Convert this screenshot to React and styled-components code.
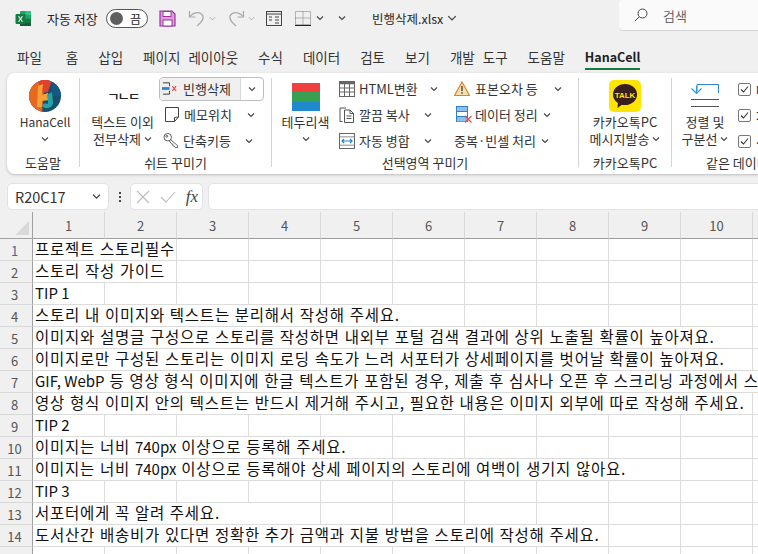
import React from 'react';
import styled, { createGlobalStyle } from 'styled-components';

const GlobalStyle = createGlobalStyle`
  html, body { margin: 0; padding: 0; background: #f0f0f0; overflow: hidden; }
  * { box-sizing: border-box; }
`;

const Page = styled.div`
  width: 758px;
  height: 554px;
  overflow: hidden;
  background: #f0f0f0;
  color: #262626;
  font-family: "Noto Sans CJK KR", sans-serif;
  font-size: 13px;
`;

/* title bar */
const TitleBar = styled.div`
  height: 36px;
  display: flex;
  align-items: center;
  padding-left: 15px;
  white-space: nowrap;
  & > * { flex: none; }
`;
const QuickItem = styled.div`
  display: flex;
  align-items: center;
  margin-left: ${p => p.$ml || 0}px;
`;
const AutoSave = styled.span`
  font-size: 13px;
  margin-left: 15px;
  width: 52px;
`;
const Toggle = styled.div`
  width: 42px;
  height: 19px;
  margin-left: 7px;
  border: 1px solid #555;
  border-radius: 10px;
  display: flex;
  align-items: center;
  padding-left: 3px;
  gap: 7px;
  font-size: 12px;
  background: #fff;
`;
const Knob = styled.span`
  width: 13px;
  height: 13px;
  border-radius: 50%;
  background: #5f5f5f;
`;
const FileName = styled.span`
  font-size: 12.5px;
  margin-left: 26px;
  width: 71px;
`;
const SearchBox = styled.div`
  margin-left: 162px;
  width: 200px;
  height: 31px;
  margin-top: -5px;
  background: #fafafa;
  border-radius: 4px;
  border-bottom: 1px solid #d4d4d4;
  display: flex;
  align-items: center;
  padding-left: 15px;
  gap: 15px;
  color: #666;
  font-size: 13px;
`;

/* tabs */
const TabBar = styled.div`
  height: 34px;
  display: flex;
  padding-left: 17px;
  gap: 20px;
`;
const Tab = styled.div`
  height: 34px;
  line-height: 42px;
  font-size: ${p => (p.$active ? 12.5 : 13.5)}px;
  word-spacing: 5px;
  white-space: nowrap;
  font-weight: ${p => (p.$active ? 700 : 400)};
  color: ${p => (p.$active ? '#1f1f1f' : '#333')};
  border-bottom: 2px solid ${p => (p.$active ? '#107c41' : 'transparent')};
  &:first-child { margin-right: 4px; }
`;

/* ribbon */
const Ribbon = styled.div`
  margin: 3px 0 0 7px;
  width: 800px;
  height: 101px;
  background: #fff;
  border-radius: 8px;
  box-shadow: 0 1px 3px rgba(0, 0, 0, 0.22);
  display: flex;
  overflow: hidden;
`;
const Group = styled.div`
  width: ${p => p.$w}px;
  flex: none;
  display: flex;
  flex-direction: column;
`;
const GroupBody = styled.div`
  height: 81px;
  display: flex;
`;
const GroupLabel = styled.div`
  height: 18px;
  line-height: 18px;
  font-size: 13px;
  color: #333;
  white-space: nowrap;
  text-align: ${p => (p.$left ? 'left' : 'center')};
  padding-left: ${p => p.$pl || 0}px;
`;
const Divider = styled.div`
  width: 1px;
  flex: none;
  margin: 5px 0 7px;
  background: #d4d4d4;
`;
const BigButton = styled.div`
  width: ${p => p.$w}px;
  flex: none;
  padding: 7px 0 0 ${p => p.$pl || 0}px;
  display: flex;
  flex-direction: column;
  align-items: center;
  font-size: 13px;
  white-space: nowrap;
  color: #333;
`;
const BigIcon = styled.div`
  height: 32px;
  margin-bottom: 1px;
  display: flex;
  align-items: center;
  justify-content: center;
`;
const BigLine = styled.div`
  height: 17px;
  line-height: 17px;
  display: flex;
  align-items: center;
  font-size: ${p => p.$size || 13}px;
`;
const Stack = styled.div`
  width: ${p => p.$w}px;
  flex: none;
  padding-top: 3px;
  display: flex;
  flex-direction: column;
`;
const SmallRow = styled.div`
  height: 26px;
  display: flex;
  align-items: center;
  font-size: 13px;
  white-space: nowrap;
  color: #333;
  padding: 0 0 1px ${p => p.$pl || 0}px;
`;
const SmallIcon = styled.span`
  width: 16px;
  height: 16px;
  flex: none;
  margin-right: ${p => p.$mr ?? 4}px;
  display: flex;
  align-items: center;
  justify-content: center;
`;
const SplitButton = styled.div`
  height: 24px;
  margin: 1px 0;
  width: 105px;
  display: flex;
  border: 1px solid #bdbdbd;
  border-radius: 4px;
  overflow: hidden;
  font-size: 13px;
  color: #333;
  white-space: nowrap;
`;
const SplitMain = styled.div`
  width: 80px;
  padding: 0 0 1px 2px;
  background: #f0f0f0;
  display: flex;
  align-items: center;
`;
const SplitSide = styled.div`
  flex: 1;
  display: flex;
  align-items: center;
  justify-content: center;
  border-left: 1px solid #d8d8d8;
`;
const JamoIcon = styled.span`
  font-size: 14px;
  font-weight: 500;
  color: #222;
  letter-spacing: -2.5px;
  line-height: 14px;
  transform: scale(1, 0.8);
`;
const Swatch = styled.div`
  width: 28px;
  height: 28px;
  margin-top: 2px;
  background: linear-gradient(#f04040 33.3%, #38a050 33.3% 66.6%, #2089cd 66.6%);
`;
const ChevronWrap = styled.span`
  display: inline-flex;
  margin-left: ${p => p.$ml || 0}px;
`;
const CheckRow = styled.div`
  height: 26px;
  display: flex;
  align-items: center;
  gap: 5px;
  font-size: 13px;
  white-space: nowrap;
`;
const CheckBox = styled.span`
  width: 13px;
  height: 13px;
  flex: none;
  border: 1px solid #777;
  border-radius: 2px;
  display: flex;
  align-items: center;
  justify-content: center;
`;

/* formula bar */
const FormulaBar = styled.div`
  margin: 9px 0 0 7px;
  height: 27px;
  display: flex;
  align-items: stretch;
`;
const FieldBox = styled.div`
  width: ${p => p.$w}px;
  flex: none;
  background: #fff;
  border: 1px solid #e2e2e2;
  border-radius: 5px;
  display: flex;
  align-items: center;
`;
const NameBox = styled(FieldBox)`
  padding: 0 7px;
  justify-content: space-between;
  font-size: 14.5px;
  color: #333;
`;
const ActionBox = styled(FieldBox)`
  padding: 0 4px 0 5px;
  justify-content: space-between;
`;
const MoreDots = styled.div`
  width: 21px;
  flex: none;
  display: flex;
  flex-direction: column;
  align-items: center;
  justify-content: center;
  gap: 2px;
  span { width: 2px; height: 2px; background: #444; }
`;
const FxLabel = styled.span`
  font-family: "Liberation Serif", serif;
  font-style: italic;
  font-size: 17px;
  color: #444;
`;
const FormulaInput = styled(FieldBox)`
  margin-left: 5px;
`;

/* sheet */
const Sheet = styled.div`
  margin-top: 2px;
  background: #fff;
`;
const Line = styled.div`
  display: grid;
  grid-template-columns: 33px repeat(11, 72px);
  height: ${p => p.$h || 22}px;
`;
const Corner = styled.div`
  background: #f0f0f0;
  border-right: 1px solid #a0a0a0;
  border-bottom: 1px solid #a0a0a0;
  position: relative;
  &::after {
    content: "";
    position: absolute;
    right: 3px;
    bottom: 3px;
    border-left: 14px solid transparent;
    border-bottom: 14px solid #d9d9d9;
  }
`;
const ColHead = styled.div`
  background: #f0f0f0;
  border-right: 1px solid #d8d8d8;
  border-bottom: 1px solid #a0a0a0;
  display: flex;
  align-items: center;
  justify-content: center;
  color: #555;
  font-size: 13px;
`;
const RowHead = styled.div`
  background: #f0f0f0;
  border-right: 1px solid #a0a0a0;
  border-bottom: 1px solid #d8d8d8;
  padding-right: 3px;
  display: flex;
  align-items: center;
  justify-content: center;
  color: ${p => (p.$first ? '#3a6f96' : '#555')};
  font-size: 13px;
  padding-top: 2px;
`;
const Cell = styled.div`
  grid-column: span ${p => p.$span || 1};
  border-right: 1px solid #dcdcdc;
  border-bottom: 1px solid #dcdcdc;
  padding-left: 2px;
  font-size: 15.5px;
  letter-spacing: 0.75px;
  word-spacing: 0.7px;
  line-height: 19px;
  color: #111;
  white-space: nowrap;
  overflow: hidden;
`;
const Latin = styled.span`
  font-size: 15px;
  letter-spacing: 0;
  word-spacing: 0;
`;

const Chevron = ({ ml, size = 8, color = '#444' }) => (
  <ChevronWrap $ml={ml}>
    <svg width={size} height={size} viewBox="0 0 8 8" fill="none" stroke={color} strokeWidth="1.1">
      <path d="M1 2.5 L4 5.5 L7 2.5" />
    </svg>
  </ChevronWrap>
);

const ExcelLogo = () => (
  <svg width="17" height="17" viewBox="0 0 17 17">
    <rect x="5" y="1" width="11" height="15" rx="1" fill="#21a366" />
    <rect x="10.5" y="1" width="5.5" height="4" fill="#33c481" />
    <rect x="5" y="5" width="11" height="3.7" fill="#21a366" />
    <rect x="5" y="8.7" width="11" height="3.7" fill="#107c41" />
    <rect x="5" y="12.4" width="11" height="3.6" fill="#185c37" />
    <rect x="0.5" y="4" width="10" height="10" rx="1" fill="#107c41" />
    <path d="M3 6.2 L4.3 6.2 L5.5 8.2 L6.7 6.2 L8 6.2 L6.2 9 L8 11.8 L6.7 11.8 L5.5 9.8 L4.3 11.8 L3 11.8 L4.8 9 Z" fill="#fff" />
  </svg>
);

const SaveIcon = () => (
  <svg width="17" height="17" viewBox="0 0 17 17">
    <path d="M1 1 H13 L16 4 V16 H1 Z" fill="#d9a0d9" stroke="#a030a0" strokeWidth="1.2" />
    <rect x="4" y="1.5" width="8" height="5" fill="#fff" stroke="#a030a0" />
    <rect x="4" y="10" width="9" height="6" fill="#fff" stroke="#a030a0" />
  </svg>
);

const UndoIcon = ({ flip }) => (
  <svg width="18" height="18" viewBox="0 0 18 18" fill="none" stroke="#a8a8a8" strokeWidth="1.2"
    style={flip ? { transform: 'scaleX(-1)' } : undefined}>
    <path d="M1.5 2 V8 H7.5" />
    <path d="M2 7.5 C5 3.5 10 2.5 13.5 5 C16.5 7.5 15.5 12 9 17" />
  </svg>
);

const FormIcon = () => (
  <svg width="16" height="15" viewBox="0 0 16 15" fill="none" stroke="#444">
    <rect x="0.5" y="0.5" width="15" height="14" />
    <path d="M0.5 3 H15.5" />
    <path d="M3 6 H6 M9 6 H13 M3 9 H6 M9 9 H13 M9 12 H13" />
  </svg>
);

const BorderIcon = () => (
  <svg width="16" height="15" viewBox="0 0 16 15" fill="none" stroke="#777" strokeDasharray="1 1">
    <rect x="0.5" y="0.5" width="15" height="13" />
    <path d="M8 0.5 V14 M0.5 7 H15.5" />
    <path d="M0 14.5 H16" stroke="#222" strokeDasharray="none" />
  </svg>
);

const SearchIcon = () => (
  <svg width="14" height="14" viewBox="0 0 14 14" fill="none" stroke="#444" strokeWidth="1">
    <circle cx="8.5" cy="5.5" r="4.5" />
    <path d="M5.2 8.8 L0.8 13.2" />
  </svg>
);

const HanaLogo = () => (
  <svg width="32" height="32" viewBox="0 0 32 32">
    <defs>
      <clipPath id="hanaClip"><circle cx="16" cy="16" r="16" /></clipPath>
    </defs>
    <g clipPath="url(#hanaClip)">
      <rect width="32" height="32" fill="#17506e" />
      <path d="M0 0 H16 L13 32 H0 Z" fill="#e8681f" />
      <path d="M9 0 H23 L19 12 L12 13 Z" fill="#e0402c" />
      <path d="M9 6 L14 4 L13 15 L19 13 L20 20 L13 21 L13 27 L8 27 Z" fill="#f4a235" />
      <path d="M22 2 H32 V16 L24 16 Z" fill="#155a80" />
      <path d="M18 15 L23 12 L24 23 C23 29 15 30 13 25 L16 23 C18 25 19 24 19 22 Z" fill="#25a3ad" />
    </g>
  </svg>
);

const KakaoLogo = () => (
  <svg width="32" height="32" viewBox="0 0 32 32">
    <rect width="32" height="32" rx="5" fill="#fee500" />
    <ellipse cx="16" cy="14.5" rx="12" ry="10.5" fill="#3a1d1d" />
    <path d="M9 21 L8.5 28 L15 23 Z" fill="#3a1d1d" />
    <text x="16" y="17.5" textAnchor="middle" fontSize="8" fontWeight="700" fill="#fee500"
      fontFamily="Liberation Sans, sans-serif">TALK</text>
  </svg>
);

const RowDeleteIcon = () => (
  <svg width="17" height="13" viewBox="0 0 17 13" fill="none">
    <path d="M1 0.5 H8 V4 M1 12.5 H8 V9" stroke="#333" />
    <rect x="0" y="5" width="8" height="3" fill="#2f86d0" />
    <path d="M11 4 L15 9 M15 4 L11 9" stroke="#e34a4a" strokeWidth="1.2" />
  </svg>
);

const NoteIcon = () => (
  <svg width="14" height="15" viewBox="0 0 14 15" fill="none" stroke="#444">
    <path d="M0.5 0.5 H13.5 V10 L9.5 14.5 H0.5 Z" />
    <path d="M13.5 10 L9.5 10.5 V14.5" />
  </svg>
);

const KeyIcon = () => (
  <svg width="17" height="17" viewBox="0 0 17 17" fill="none" stroke="#555">
    <circle cx="5" cy="5" r="4" />
    <circle cx="4" cy="4" r="1" />
    <path d="M8 7.5 L15.5 14 V16 H13 L12 14.5 L10.5 14 V12.5 L9 12 L6.5 8.5" />
  </svg>
);

const TableIcon = () => (
  <svg width="16" height="16" viewBox="0 0 16 16" fill="none" stroke="#666">
    <rect x="0.5" y="0.5" width="15" height="15" />
    <path d="M0.5 2 H15.5" strokeWidth="2.4" />
    <path d="M0.5 7 H15.5 M0.5 11 H15.5 M5.5 3 V15.5 M10.5 3 V15.5" />
  </svg>
);

const CopyIcon = () => (
  <svg width="16" height="16" viewBox="0 0 16 16" fill="none" stroke="#555">
    <path d="M3.5 14.5 H1 V1 H7" />
    <path d="M5.5 3 H11 L14.5 6.5 V15.5 H5.5 Z" />
    <path d="M11 3 V6.5 H14.5 M7.5 9 H12.5 M7.5 11.5 H12.5" />
  </svg>
);

const MergeIcon = () => (
  <svg width="16" height="16" viewBox="0 0 16 16" fill="none">
    <rect x="0.5" y="0.5" width="15" height="15" stroke="#666" />
    <path d="M0.5 4 H15.5 M0.5 12 H15.5" stroke="#666" />
    <rect x="1" y="4.5" width="14" height="7" fill="#fff" />
    <path d="M3 8 H13 M5 6 L3 8 L5 10 M11 6 L13 8 L11 10" stroke="#2088cc" strokeWidth="1.2" />
  </svg>
);

const WarnIcon = () => (
  <svg width="16" height="15" viewBox="0 0 16 15">
    <path d="M8 1 L15.5 14.5 H0.5 Z" fill="#f7dfae" stroke="#d8802a" strokeWidth="1.2" />
    <path d="M8 5 V10 M8 11.2 V12.8" stroke="#333" strokeWidth="1.3" />
  </svg>
);

const CleanupIcon = () => (
  <svg width="16" height="17" viewBox="0 0 16 17" fill="none">
    <rect x="0.5" y="0.5" width="11" height="15" stroke="#2f80c8" />
    <rect x="1" y="1" width="10" height="4.5" fill="#8cc0ea" />
    <rect x="1" y="11" width="10" height="4.5" fill="#8cc0ea" />
    <path d="M0.5 5.5 H11.5 M0.5 10.5 H11.5" stroke="#2f80c8" />
    <path d="M9 10 L15.5 16.5 M15.5 10 L9 16.5" stroke="#e84a4a" strokeWidth="1.2" />
  </svg>
);

const SortIcon = () => (
  <svg width="28" height="24" viewBox="0 0 28 24" fill="none">
    <path d="M6 7 V0.5 H27.5 V9" stroke="#2f86c8" />
    <path d="M0.5 4.5 L5.5 9.5 L10.5 4.5 M5.5 9 V2" stroke="#2f9bd8" strokeWidth="1.2" />
    <path d="M0 15.5 H28 M0 22.5 H28" stroke="#555" />
  </svg>
);

const CheckMark = () => (
  <svg width="9" height="9" viewBox="0 0 9 9" fill="none" stroke="#333" strokeWidth="1.1">
    <path d="M1 4.5 L3.5 7 L8 1.5" />
  </svg>
);

const TABS = ['파일', '홈', '삽입', '페이지 레이아웃', '수식', '데이터', '검토', '보기', '개발 도구', '도움말'];

const ROWS = [
  { text: '프로젝트 스토리필수', span: 2 },
  { text: '스토리 작성 가이드', span: 2 },
  { text: 'TIP 1', span: 1 },
  { text: '스토리 내 이미지와 텍스트는 분리해서 작성해 주세요.', span: 6 },
  { text: '이미지와 설명글 구성으로 스토리를 작성하면 내외부 포털 검색 결과에 상위 노출될 확률이 높아져요.', span: 10 },
  { text: '이미지로만 구성된 스토리는 이미지 로딩 속도가 느려 서포터가 상세페이지를 벗어날 확률이 높아져요.', span: 10 },
  { text: 'GIF, WebP 등 영상 형식 이미지에 한글 텍스트가 포함된 경우, 제출 후 심사나 오픈 후 스크리닝 과정에서 스토리 수정을 요청할 수 있어요.', span: 11 },
  { text: '영상 형식 이미지 안의 텍스트는 반드시 제거해 주시고, 필요한 내용은 이미지 외부에 따로 작성해 주세요.', span: 10 },
  { text: 'TIP 2', span: 1 },
  { text: '이미지는 너비 740px 이상으로 등록해 주세요.', span: 5 },
  { text: '이미지는 너비 740px 이상으로 등록해야 상세 페이지의 스토리에 여백이 생기지 않아요.', span: 9 },
  { text: 'TIP 3', span: 1 },
  { text: '서포터에게 꼭 알려 주세요.', span: 4 },
  { text: '도서산간 배송비가 있다면 정확한 추가 금액과 지불 방법을 스토리에 작성해 주세요.', span: 8 },
  { text: '', span: 1 },
];

const fillers = (span) => Array.from({ length: 11 - span }, (_, i) => <Cell key={i} />);

// latin runs are set without the hangul tracking
const cellText = (text) =>
  text.split(/(GIF, WebP|TIP \d|740px)/).map((part, i) => (i % 2 ? <Latin key={i}>{part}</Latin> : part));

export default function App() {
  return (
    <Page>
      <GlobalStyle />
      <TitleBar>
        <ExcelLogo />
        <AutoSave>자동 저장</AutoSave>
        <Toggle><Knob />끔</Toggle>
        <QuickItem $ml={11}><SaveIcon /></QuickItem>
        <QuickItem $ml={12}><UndoIcon /><Chevron ml={3} size={7} color="#aaa" /></QuickItem>
        <QuickItem $ml={11}><UndoIcon flip /><Chevron ml={3} size={7} color="#aaa" /></QuickItem>
        <QuickItem $ml={11}><FormIcon /></QuickItem>
        <QuickItem $ml={13}><BorderIcon /><Chevron ml={5} /></QuickItem>
        <QuickItem $ml={14}><Chevron /></QuickItem>
        <FileName>빈행삭제.xlsx</FileName>
        <Chevron ml={4} size={10} />
        <SearchBox><SearchIcon />검색</SearchBox>
      </TitleBar>

      <TabBar>
        {TABS.map((t) => <Tab key={t}>{t}</Tab>)}
        <Tab $active>HanaCell</Tab>
      </TabBar>

      <Ribbon>
        <Group $w={72}>
          <GroupBody>
            <BigButton $w={72} $pl={4}>
              <BigIcon><HanaLogo /></BigIcon>
              <BigLine $size={12}>HanaCell</BigLine>
              <BigLine><Chevron /></BigLine>
            </BigButton>
          </GroupBody>
          <GroupLabel>도움말</GroupLabel>
        </Group>
        <Divider />

        <Group $w={191}>
          <GroupBody>
            <BigButton $w={79} $pl={6}>
              <BigIcon><JamoIcon>ㄱㄴㄷ</JamoIcon></BigIcon>
              <BigLine>텍스트 이외</BigLine>
              <BigLine>전부삭제<Chevron ml={3} /></BigLine>
            </BigButton>
            <Stack $w={110}>
              <SplitButton>
                <SplitMain><SmallIcon $mr={5}><RowDeleteIcon /></SmallIcon>빈행삭제</SplitMain>
                <SplitSide><Chevron /></SplitSide>
              </SplitButton>
              <SmallRow $pl={5}><SmallIcon><NoteIcon /></SmallIcon>메모위치<Chevron ml={15} /></SmallRow>
              <SmallRow $pl={4}><SmallIcon $mr={4}><KeyIcon /></SmallIcon>단축키등<Chevron ml={14} /></SmallRow>
            </Stack>
          </GroupBody>
          <GroupLabel>쉬트 꾸미기</GroupLabel>
        </Group>
        <Divider />

        <Group $w={306}>
          <GroupBody>
            <BigButton $w={67}>
              <BigIcon><Swatch /></BigIcon>
              <BigLine>테두리색</BigLine>
              <BigLine><Chevron /></BigLine>
            </BigButton>
            <Stack $w={115}>
              <SmallRow><SmallIcon><TableIcon /></SmallIcon>HTML변환<Chevron ml={12} /></SmallRow>
              <SmallRow><SmallIcon><CopyIcon /></SmallIcon>깔끔 복사<Chevron ml={14} /></SmallRow>
              <SmallRow><SmallIcon><MergeIcon /></SmallIcon>자동 병합<Chevron ml={14} /></SmallRow>
            </Stack>
            <Stack $w={120}>
              <SmallRow><SmallIcon $mr={5}><WarnIcon /></SmallIcon>표본오차 등<Chevron ml={16} /></SmallRow>
              <SmallRow $pl={2}><SmallIcon $mr={3}><CleanupIcon /></SmallIcon>데이터 정리<Chevron ml={5} /></SmallRow>
              <SmallRow>중복·빈셀 처리<Chevron ml={5} /></SmallRow>
            </Stack>
          </GroupBody>
          <GroupLabel>선택영역 꾸미기</GroupLabel>
        </Group>
        <Divider />

        <Group $w={92}>
          <GroupBody>
            <BigButton $w={92}>
              <BigIcon><KakaoLogo /></BigIcon>
              <BigLine>카카오톡PC</BigLine>
              <BigLine>메시지발송<Chevron ml={3} /></BigLine>
            </BigButton>
          </GroupBody>
          <GroupLabel>카카오톡PC</GroupLabel>
        </Group>
        <Divider />

        <Group $w={130}>
          <GroupBody>
            <BigButton $w={66}>
              <BigIcon><SortIcon /></BigIcon>
              <BigLine>정렬 및</BigLine>
              <BigLine>구분선<Chevron ml={3} /></BigLine>
            </BigButton>
            <Stack $w={60}>
              {['데이터', '자동', '선택'].map((t) => (
                <CheckRow key={t}><CheckBox><CheckMark /></CheckBox>{t}</CheckRow>
              ))}
            </Stack>
          </GroupBody>
          <GroupLabel $left $pl={34}>같은 데이터 병합</GroupLabel>
        </Group>
      </Ribbon>

      <FormulaBar>
        <NameBox $w={102}>R20C17<Chevron size={9} /></NameBox>
        <MoreDots><span /><span /><span /></MoreDots>
        <ActionBox $w={73}>
          <svg width="14" height="14" viewBox="0 0 14 14" stroke="#bbb" strokeWidth="1.1"><path d="M1 1 L13 13 M13 1 L1 13" /></svg>
          <svg width="16" height="14" viewBox="0 0 16 14" fill="none" stroke="#bbb" strokeWidth="1.1"><path d="M1 7 L6 12 L15 2" /></svg>
          <FxLabel>fx</FxLabel>
        </ActionBox>
        <FormulaInput $w={560} />
      </FormulaBar>

      <Sheet>
        <Line $h={27}>
          <Corner />
          {Array.from({ length: 11 }, (_, i) => <ColHead key={i}>{i + 1}</ColHead>)}
        </Line>
        {ROWS.map((r, i) => (
          <Line key={i}>
            <RowHead $first={i === 0}>{i + 1}</RowHead>
            <Cell $span={r.span}>{cellText(r.text)}</Cell>
            {fillers(r.span)}
          </Line>
        ))}
      </Sheet>
    </Page>
  );
}
